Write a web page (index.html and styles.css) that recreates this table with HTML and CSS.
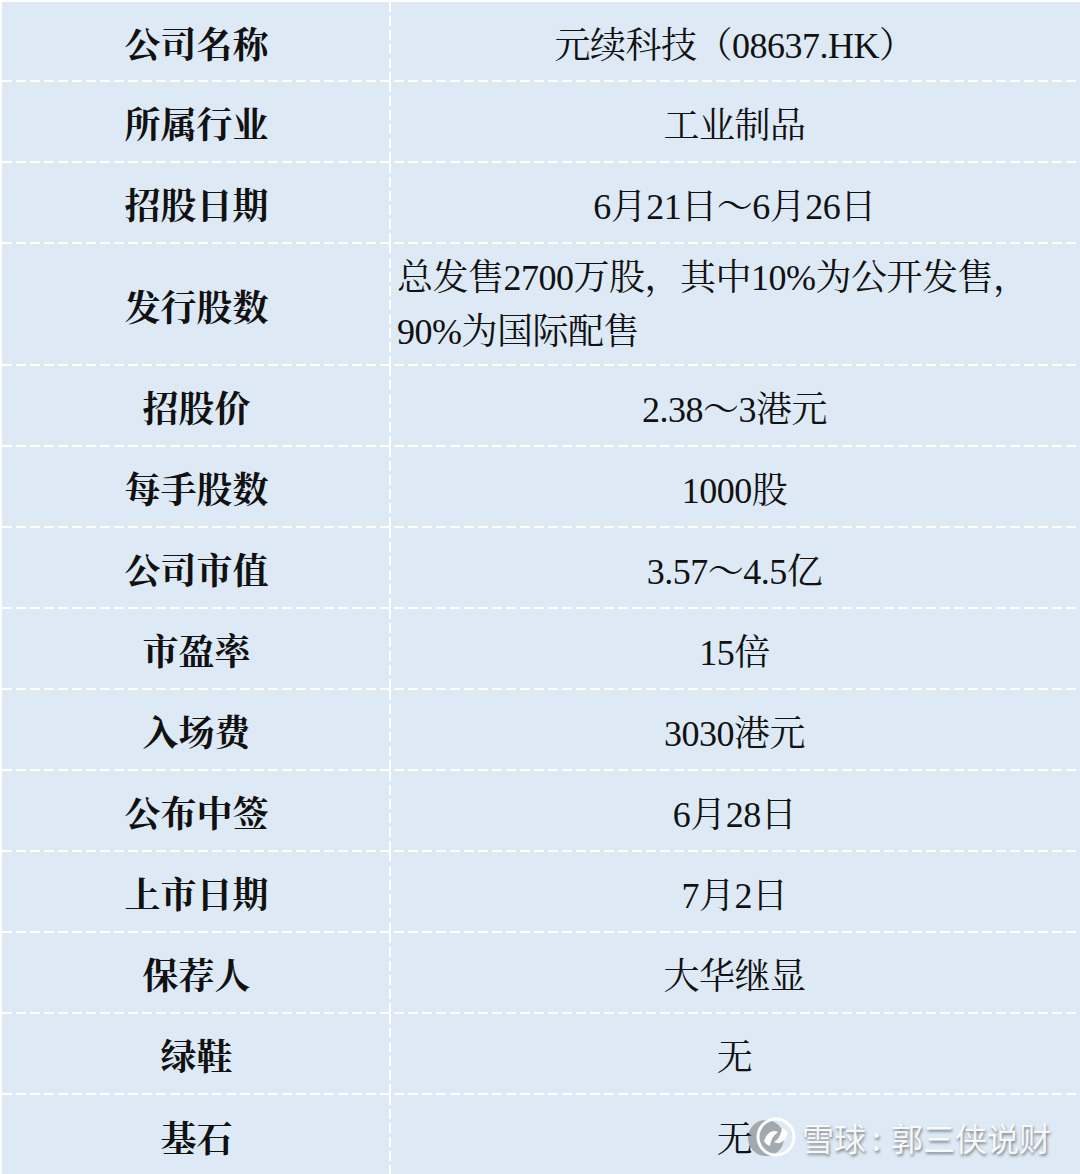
FILE: index.html
```html
<!DOCTYPE html>
<html lang="zh-CN">
<head>
<meta charset="utf-8">
<title>元续科技 招股信息</title>
<link rel="stylesheet" href="styles.css">
</head>
<body>
<div class="sheet">
  <div class="table">
    <div class="row first"><div class="key">公司名称</div><div class="val">元续科技（08637.HK）</div></div>
    <div class="row"><div class="key">所属行业</div><div class="val">工业制品</div></div>
    <div class="row"><div class="key">招股日期</div><div class="val">6月21日～6月26日</div></div>
    <div class="row tall"><div class="key">发行股数</div><div class="val left">总发售2700万股，其中10%为公开发售，<br>90%为国际配售</div></div>
    <div class="row"><div class="key">招股价</div><div class="val">2.38～3港元</div></div>
    <div class="row"><div class="key">每手股数</div><div class="val">1000股</div></div>
    <div class="row"><div class="key">公司市值</div><div class="val">3.57～4.5亿</div></div>
    <div class="row"><div class="key">市盈率</div><div class="val">15倍</div></div>
    <div class="row"><div class="key">入场费</div><div class="val">3030港元</div></div>
    <div class="row"><div class="key">公布中签</div><div class="val">6月28日</div></div>
    <div class="row"><div class="key">上市日期</div><div class="val">7月2日</div></div>
    <div class="row"><div class="key">保荐人</div><div class="val">大华继显</div></div>
    <div class="row"><div class="key">绿鞋</div><div class="val">无</div></div>
    <div class="row last"><div class="key">基石</div><div class="val">无</div></div>
  </div>
  <div class="watermark">
    <svg class="wm-logo" width="48" height="46" viewBox="0 0 48 46" aria-hidden="true">
      <circle cx="18" cy="24" r="18" fill="rgba(90,90,90,0.45)"/>
      <circle cx="28" cy="23" r="18" fill="none" stroke="#ffffff" stroke-width="3"/>
      <path d="M16 27 C19 18 25 15 30 18 C26 21 23 25 22 32 C19 31 17 29 16 27 Z" fill="#ffffff"/>
      <path d="M40 19 C37 28 31 31 26 28 C30 26 33 21 34 14 C37 15 39 17 40 19 Z" fill="#ffffff"/>
    </svg>
    <span class="wm-text">雪球<span class="colon">:</span>郭三侠说财</span>
  </div>
</div>
</body>
</html>
```

FILE: styles.css
```css
html, body {
  margin: 0;
  padding: 0;
  background: #ffffff;
}

.sheet {
  position: relative;
  width: 1080px;
  height: 1174px;
  overflow: hidden;
}

.table {
  margin: 2px 0 0 2px;
  background: #dde9f5;
  display: flex;
  flex-direction: column;
  min-height: 1180px;
}

.row {
  display: grid;
  grid-template-columns: 387px 1fr;
  height: 81px;
  background-image: repeating-linear-gradient(to right, #ffffff 0 10px, transparent 10px 14px);
  background-size: 100% 2px;
  background-position: 0 100%;
  background-repeat: no-repeat;
}

.row.first { height: 80px; }
.row.tall { height: 122px; }
.row.last { height: 90px; background-image: none; }

.key, .val {
  display: flex;
  align-items: center;
  justify-content: center;
  font-size: 36px;
  color: #111111;
}

.key {
  font-family: "Noto Serif CJK SC", "Liberation Serif", "Noto Sans CJK SC", serif;
  font-weight: 700;
  padding-left: 2px;
}

.row.last .key, .row.last .val { padding-bottom: 8px; }

.val {
  font-family: "Liberation Serif", "Noto Serif CJK SC", "Noto Sans CJK SC", serif;
  font-weight: 400;
  letter-spacing: -0.5px;
  background-image: repeating-linear-gradient(to bottom, #ffffff 0 10px, transparent 10px 14px);
  background-size: 2px 100%;
  background-position: 0 0;
  background-repeat: no-repeat;
}

.val.left {
  justify-content: flex-start;
  text-align: left;
  padding-left: 8px;
  line-height: 54px;
}

.watermark {
  position: absolute;
  left: 748px;
  top: 1114px;
  display: flex;
  align-items: center;
  gap: 6px;
}

.wm-text {
  font-family: "Noto Sans CJK SC", sans-serif;
  font-size: 32px;
  color: rgba(255, 255, 255, 0.92);
  text-shadow: 1px 2px 3px rgba(0, 0, 0, 0.45);
}

.colon {
  display: inline-block;
  margin: 0 10px 0 6px;
}
```
